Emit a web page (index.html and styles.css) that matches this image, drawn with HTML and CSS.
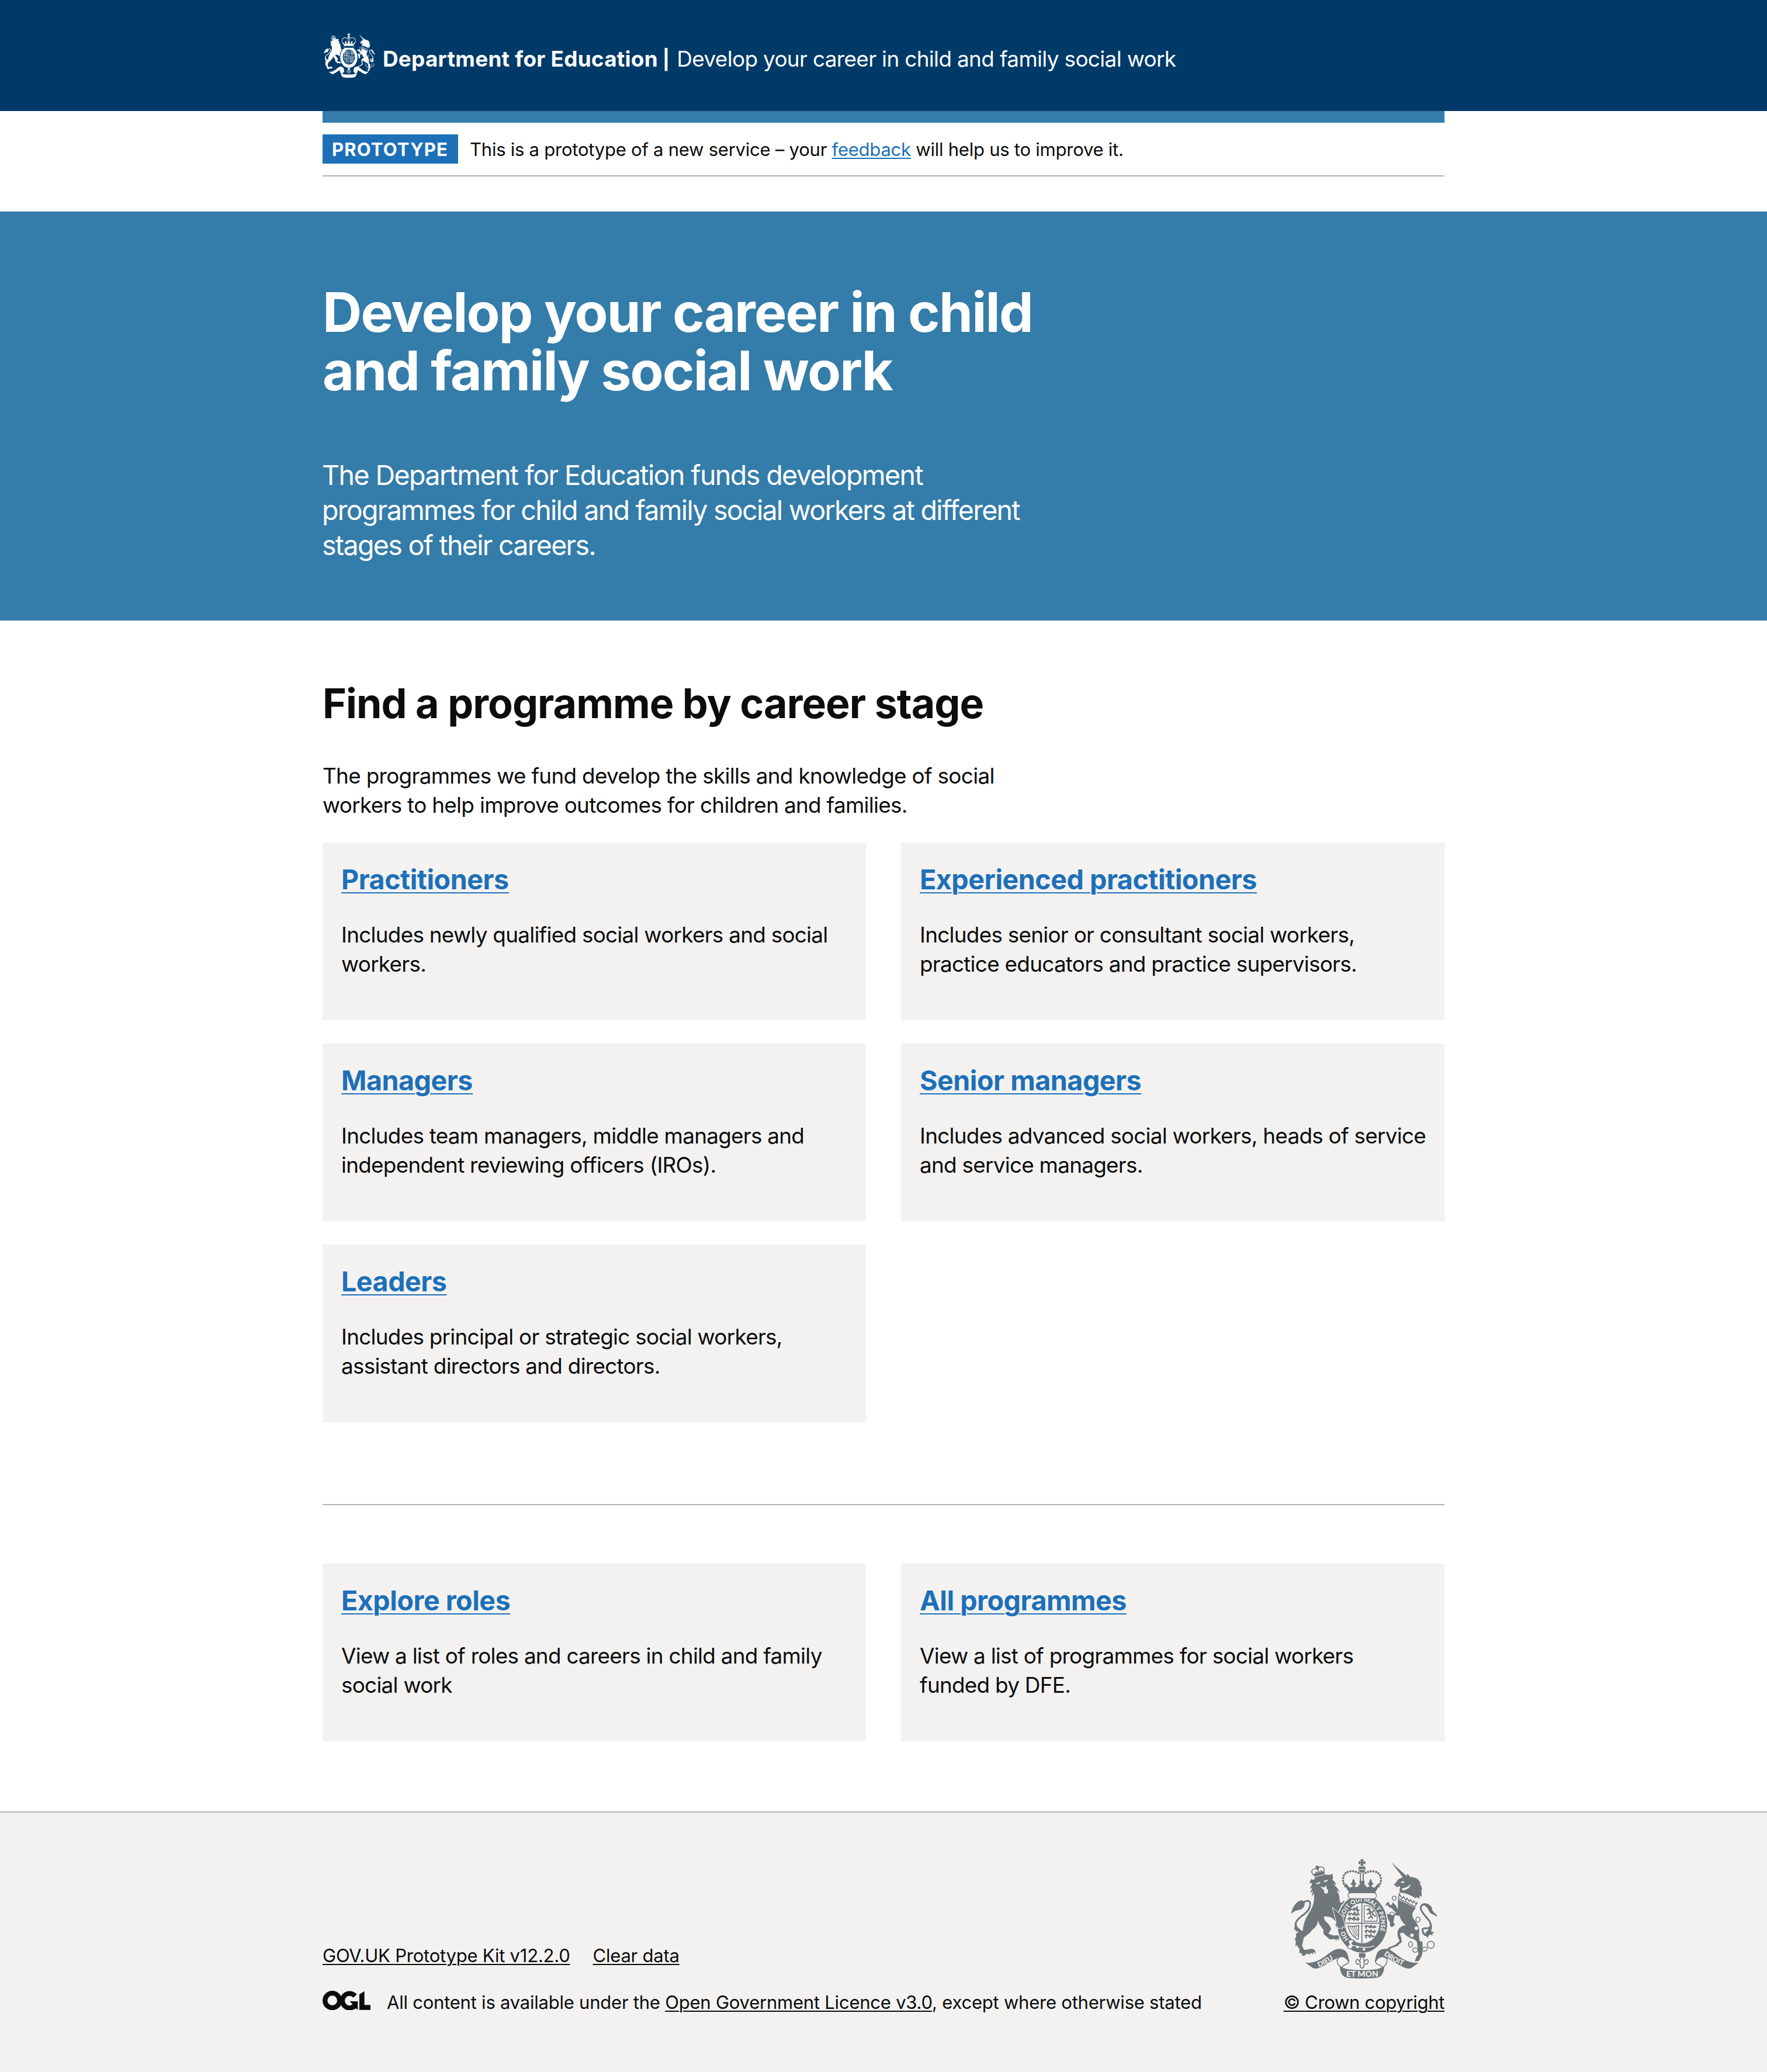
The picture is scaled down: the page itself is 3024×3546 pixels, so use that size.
FILE: index.html
```html
<!DOCTYPE html>
<html lang="en">
<head>
<meta charset="utf-8">
<title>Develop your career in child and family social work</title>
<link rel="stylesheet" href="styles.css">
</head>
<body>
<svg class="defs" aria-hidden="true">
  <defs>
    <g id="lion">
      <!-- lion's crown -->
      <g transform="rotate(-17 233 140)">
        <path d="M203 152h58v6h-58z"/>
        <path d="M206 149l-4-22 10 9 8-13 8 12 5-19 6 19 8-12 7 13 10-9-4 22z"/>
        <path d="M200 134q-6-22 12-25q12-1 19 10q7-12 20-10q16 3 12 25" fill="none" stroke="currentColor" stroke-width="7" stroke-linecap="round" stroke-dasharray="0 8.5"/>
        <path d="M228 96h10v6h6v7h-6v8h-10v-8h-6v-7h6z"/>
      </g>
      <!-- head, mane and body -->
      <path d="M187 178l4-10 12 3q30-18 67-26l17 1 14-6 3 22-4 8q16 12 20 28l-17-6q22 16 36 42l-18-10q14 18 16 38l2 24q6 3 12 1l9-10 6 9-22 18q16 22 6 42l6 50q9 14 9 30l-10-9-2 15-8-7-8 8-5-12-9 7 3-13-10-2 8-12-2-12-22-22q-20-11-44-7 4 22 16 30 22 20 22 36l-14 22q20 10 38 9 14-3 24 4l6 14-16-5 6 12-14-8-1 10-13-9-22 3-30-26q-6-10-2-22l-22-30-8-20q0 26-26 46l-18 20q-20 12-28 22l-9 42 10 20q18 2 30-4 20-3 28 10l2 14-15-9 4 14-14-8-8 8-12-5-14 12-10-2-4-13-10 2q-2-14 0-26l-8-4-4-12-9 4 2-26-6-8 8-14-2-14 14-10 22-8q2-42 28-84 30-40 30-86l-2-22-9 18q-2-14 6-28l-17 10q8-12 12-26l-12 4q10-16 12-30-10 4-14-2 6-6 6-14z"/>
      <!-- tail -->
      <path d="M168 458q-62-38-56-62 4-22 44-48 34-26 30-58-6-20-32-4" fill="none" stroke="currentColor" stroke-width="9"/>
      <path d="M156 283q-12-12-29-2-16 9-30 36-4 12-10 30 20-18 36-20 36-4 36-38z"/>
      <path d="M108 398l-2 24-4 4 14 4-6 8 14-2 6 12 8-12 6 2-10-14q-14-8-18-26z"/>
    </g>
    <g id="unicorn">
      <path d="M603 81l80 72-16 12z"/>
      <!-- head and mane -->
      <path d="M617 196q14-14 22-28 20-10 42-12l4-16q10 6 14 16 40 0 56 34l-8-3q14 18 14 40l-5-6q4 18 3 38l-10-8-2 18-14-10-2 8q-46-28-84-30l-2-18q6-8 0-16l-10 6-9-2 3-8-9 2z"/>
      <!-- crown collar -->
      <path d="M644 243l-4 24 84 42 14-22-10 6-10-14-5 10-12-16-5 10-12-18-6 12-12-20-8 10z" fill="none" stroke="currentColor" stroke-width="5"/>
      <!-- body and legs -->
      <path d="M637 272l92 44-13 18q-12 18 4 42 22 22 26 52v44l4 14 13 4v60l-6 16-12 22-22 2 10-26 9-8-4-36-4-32-12-10q-44-14-55-34-26-4-16 14l7 32-26 22-30 10-14 16-24 12 2-13 10-4 12-14 36-14 22-20q-18-30-8-56 10-20 40-26-24-14-32-46-14-4-26-4l-6 36 8 12-10 10-8 4-10-14 4-6-13-26-24-14 16-10 36 8 14-12-22-24-12-4-10-12-12 4 10-18 26-2 18 16 12 22z"/>
      <!-- tail -->
      <path d="M772 448q-22-30 10-28 34 4 18-36l-30-36q-34-44 4-52" fill="none" stroke="currentColor" stroke-width="9"/>
      <path d="M758 296q22-8 34 0 20 8 22 32 6 10 23 24l-1 10q-10-12-22-14-14-4-22-26-10-18-34-26z"/>
      <path d="M744 428q10 14 30 22l24-30q12-10 8-30 12 24 0 46l20 6-12 4 2 10-16-4-12 18-6-10-8 0z"/>
    </g>
    <g id="unicorn-chain" fill="none" stroke="currentColor" stroke-width="4.5">
      <ellipse cx="618" cy="266" rx="10" ry="11"/>
      <ellipse cx="607" cy="350" rx="12" ry="13"/>
      <ellipse cx="740" cy="375" rx="11" ry="13"/>
      <ellipse cx="702" cy="503" rx="10" ry="14"/>
      <ellipse cx="726" cy="532" rx="13" ry="11"/>
      <ellipse cx="775" cy="527" rx="13" ry="10" transform="rotate(-20 775 527)"/>
      <circle cx="806" cy="505" r="18"/>
    </g>
    <g id="crown">
      <path d="M444 66h18l-4 13 12-5v18l-12-5 3 12h-17l3-12-12 5v-18l12 5z"/>
      <path d="M437 103h31l4 14h-39z"/>
      <path d="M433 121h39q-6 14-19 14t-20-14z"/>
      <path d="M445 136v42M459 136v42" stroke="currentColor" stroke-width="6"/>
      <path d="M366 203q-16-24-9-48 10-26 40-28 26 0 46 14M539 203q16-24 9-48-10-26-40-28-26 0-46 14" fill="none" stroke="currentColor" stroke-width="12" stroke-linecap="round" stroke-dasharray="0 14"/>
      <path d="M364 190q14 4 20 18 16 8 22-6l-13-10 8-6 2-10 6-10 6 10 2 10 8 6-11 10q10 14 22 0l-4-8 10 5-3-22h28l-3 22 10-5-4 8q12 14 22 0l-11-10 8-6 2-10 6-10 6 10 2 10 8 6-13 10q6 14 22 6 6-14 20-18-2 20-18 38l-4 18H386l-4-18q-16-18-18-38z"/>
      <rect x="381" y="238" width="146" height="30" rx="15" class="arms-ground" stroke="currentColor" stroke-width="4"/>
    </g>
    <g id="quarters">
      <ellipse cx="454" cy="394" rx="88" ry="104" class="arms-ground"/>
      <g fill="none" stroke="currentColor" stroke-width="5">
        <path d="M452 290v210M368 394h172"/>
        <path d="M464 304v80h66v-24q-8-36-44-56z" stroke-width="4"/>
        <path d="M388 328q14-12 24 0l10-10 6 12 12-4M382 350q14-12 24 0l10-10 6 12 18-4M378 374q14-12 26 0l10-10 8 12 18-4M392 318l-2 16M412 312v14M428 306v20M386 340l6 16M414 336l2 18M432 334l-2 18M388 362v20M412 360v22M432 360v22" stroke-width="7"/>
        <path d="M466 412q14-10 24 2l10-8 6 10 20-4M466 436q14-10 24 2l10-8 6 10 20-4M466 460q14-10 24 2l10-8 6 10 12-4M474 404v18M496 404v16M516 404v16M474 428v18M496 428v18M516 428v18M474 452v20M494 452v18" stroke-width="7"/>
        <path d="M476 326q12-8 16 8 14 0 16 14l16 12M478 348l16-8 6 18-16 12M486 316l10 14M504 340l10-12M500 358l8 14" stroke-width="7"/>
        <path d="M382 408q30 6 54-2l-2 68q-8 6-14-4-34-26-38-62z"/>
        <path d="M392 412l28 52M402 412l24 50M412 412l18 44M422 411l8 26" stroke-width="3"/>
      </g>
    </g>
    <g id="scroll">
      <path id="ribbon-end" d="M162 597C228 602 262 562 300 537C325 520 362 522 376 548Q386 568 385 596Q370 568 345 568C312 574 272 606 240 620Q215 632 200 624Z"/>
      <use href="#ribbon-end" transform="matrix(-1 0 0 1 906 0)"/>
      <path id="ribbon-fold" d="M385 580q2 22-20 28-12 4-14 14-22-8-26-32-2-20 20-24" fill="none" stroke="currentColor" stroke-width="4.5"/>
      <use href="#ribbon-fold" transform="matrix(-1 0 0 1 906 0)"/>
      <path d="M338 614q20 14 58 18 57 5 114 0 38-4 58-18-2 28-14 46-12 14-36 16-65 4-130 0-24-2-36-16-12-18-14-46z"/>
    </g>
    <g id="fleur">
      <path d="M437 548h33v22h-33z"/>
      <path d="M453 564q16 16 8 36 8-20 18-20 12 8 0 24h-14l-4 6 2 8-10 8-10-8 2-8-4-6h-14q-12-16 0-24 10 0 18 20-8-20 8-36z" class="arms-ground" stroke="currentColor" stroke-width="5"/>
    </g>
    <path id="ring-lower" d="M386 476A96 113 0 0 1 358 396"/>
    <path id="ring-upper" d="M361 367A96 113 0 1 1 507 490"/>
    <path id="scroll-dieu" d="M232 620Q284 598 336 556"/>
    <path id="scroll-droit" d="M564 556Q618 600 690 620"/>
  </defs>
</svg>

<header class="header">
  <div class="container header-row">
    <svg class="header-crest" viewBox="87 66 750 612" preserveAspectRatio="none" fill="currentColor" role="img" aria-label="Royal coat of arms">
      <use href="#lion"/><use href="#unicorn"/><use href="#unicorn-chain"/><use href="#scroll"/>
      <path d="M325 590q0-22 20-24 30 0 40 20-4 20-34 36-22-8-26-32zM581 590q0-22-20-24-30 0-40 20 4 20 34 36 22-8 26-32z"/>
      <ellipse cx="454" cy="396" rx="136" ry="156" class="arms-ground"/>
      <ellipse cx="454" cy="396" rx="126" ry="147"/>
      <use href="#quarters"/><use href="#crown"/><use href="#fleur"/>
    </svg>
    <p class="header-title"><span class="header-org">Department for Education <span class="bar">|</span></span><span class="header-service">Develop your career in child and family social work</span></p>
  </div>
</header>

<div class="container">
  <div class="phase-banner">
    <strong class="tag">PROTOTYPE</strong>
    <span class="phase-text">This is a prototype of a new service – your <a class="link" href="#">feedback</a> will help us to improve it.</span>
  </div>
</div>

<section class="hero">
  <div class="container">
    <h1 class="hero-title">Develop your career in child<br>and family social work</h1>
    <p class="hero-lead"><span class="lead-first">The Department for Education funds development</span><br>programmes for child and family social workers at different<br>stages of their careers.</p>
  </div>
</section>

<main class="container main">
  <h2 class="section-title">Find a programme by career stage</h2>
  <p class="body intro">The programmes we fund develop the skills and knowledge of social<br>workers to help improve outcomes for children and families.</p>
  <div class="cards">
    <article class="card">
      <h3 class="card-title"><a class="link" href="#">Practitioners</a></h3>
      <p class="body">Includes newly qualified social workers and social<br>workers.</p>
    </article>
    <article class="card">
      <h3 class="card-title"><a class="link" href="#">Experienced practitioners</a></h3>
      <p class="body">Includes senior or consultant social workers,<br>practice educators and practice supervisors.</p>
    </article>
    <article class="card">
      <h3 class="card-title"><a class="link" href="#">Managers</a></h3>
      <p class="body">Includes team managers, middle managers and<br>independent reviewing officers (IROs).</p>
    </article>
    <article class="card">
      <h3 class="card-title"><a class="link" href="#">Senior managers</a></h3>
      <p class="body">Includes advanced social workers, heads of service<br>and service managers.</p>
    </article>
    <article class="card">
      <h3 class="card-title"><a class="link" href="#">Leaders</a></h3>
      <p class="body">Includes principal or strategic social workers,<br>assistant directors and directors.</p>
    </article>
  </div>
  <hr class="rule">
  <div class="cards">
    <article class="card">
      <h3 class="card-title"><a class="link" href="#">Explore roles</a></h3>
      <p class="body">View a list of roles and careers in child and family<br>social work</p>
    </article>
    <article class="card">
      <h3 class="card-title"><a class="link" href="#">All programmes</a></h3>
      <p class="body">View a list of programmes for social workers<br>funded by DFE.</p>
    </article>
  </div>
</main>

<footer class="footer">
  <div class="container footer-row">
    <div class="footer-meta">
      <div class="footer-links"><a href="#">GOV.UK Prototype Kit v12.2.0</a><a href="#">Clear data</a></div>
      <div class="licence">
        <svg class="ogl" viewBox="0 0 246 100" role="img" aria-label="Open Government Licence">
          <circle cx="50" cy="50" r="37.5" fill="none" stroke="currentColor" stroke-width="25"/>
          <path d="M167 27A37 37 0 1 0 167 75" fill="none" stroke="currentColor" stroke-width="25"/>
          <path d="M139 54h42v44l-10-8q-8 6-20 8l-8-20 12-8z" fill="currentColor"/>
          <path d="M189 19L215 2V73H246V98H189Z" fill="currentColor"/>
        </svg>
        <span>All content is available under the <a href="#">Open Government Licence v3.0</a>, except where otherwise stated</span>
      </div>
    </div>
    <div class="copyright">
      <svg class="footer-arms" viewBox="87 66 750 612" fill="currentColor" role="img" aria-label="Royal coat of arms">
        <use href="#lion"/><use href="#unicorn"/><use href="#unicorn-chain"/>
        <path d="M216 190l20-8 4 6-18 6zM254 178l22-8v6l-14 8z" class="arms-ground"/>
        <path d="M238 206l20 4 14-10-2 14 8 10q4 16-10 18-12-2-10-18z" class="arms-ground"/>
        <path d="M650 184l14-6 8 6-12 4zM656 216q34-4 46-24-2 28-40 34z" class="arms-ground"/>
        <g class="arms-ground"><circle cx="732" cy="420" r="9"/><circle cx="709" cy="456" r="9"/><ellipse cx="600" cy="292" rx="8" ry="9"/></g>
        <ellipse cx="454" cy="396" rx="133" ry="154" class="arms-ground"/>
        <ellipse cx="454" cy="396" rx="128" ry="149"/>
        <use href="#quarters"/>
        <path d="M382 486q12-14 32-2l-14 12 8 12-8 16q-18 4-24-10l12-10z" class="arms-ground" stroke="currentColor" stroke-width="4"/>
        <path d="M398 506q60 20 118 6" fill="none" class="ring-edge"/>
        <g class="arms-ground"><circle cx="429" cy="516" r="7"/><circle cx="463" cy="528" r="7"/></g>
        <text class="motto motto-ring"><textPath href="#ring-lower">HO</textPath></text>
        <text class="motto motto-ring"><textPath href="#ring-upper">SOIT QUI MAL Y PENSE</textPath></text>
        <!-- forepaw resting on the garter -->
        <path d="M300 312l50 42q10 20 14 46l-2 18-10-7-2 13-9-7-8 8-5-12-9 7 3-13-10-2 8-12-2-14z" class="paw"/>
        <use href="#crown"/><use href="#scroll"/><use href="#fleur"/>
        <text class="motto motto-scroll"><textPath href="#scroll-dieu">DIEU</textPath></text>
        <text class="motto motto-scroll"><textPath href="#scroll-droit">DROIT</textPath></text>
        <text class="motto motto-base" x="454" y="669" text-anchor="middle">ET MON</text>
      </svg>
      <a href="#">© Crown copyright</a>
    </div>
  </div>
</footer>
</body>
</html>
```
FILE: styles.css
```css
* { box-sizing: border-box; }

body {
  margin: 0;
  background: #fff;
  color: #0b0c0c;
  font-family: Inter, "Liberation Sans", sans-serif;
}

h1, h2, h3, p { margin: 0; }

.defs { display: block; width: 0; height: 0; }

.container { width: 1920px; margin: 0 auto; }

a {
  color: inherit;
  text-decoration: underline;
  text-decoration-thickness: 2px;
  text-underline-offset: 0.1em;
}

.link { color: #1d70b8; }

/* Header */
.header {
  --ground: #003a69;
  height: 190px;
  background: #003a69;
  color: #fff;
}

.header-row { display: flex; padding-top: 57px; }

.header-crest { width: 88px; height: 76px; margin-left: 2px; }

.arms-ground { fill: var(--ground); }

.header-title {
  display: flex;
  gap: 12px;
  margin: 19px 0 0 13px;
  font-size: 36.86px;
  line-height: 50px;
  white-space: nowrap;
}

.header-org { font-weight: 700; letter-spacing: 0.25px; }

.bar { margin-left: -1px; font-size: 33px; }

.header-service { letter-spacing: -0.64px; }

/* Phase banner */
.phase-banner {
  display: flex;
  gap: 20px;
  height: 112px;
  padding-top: 20px;
  border-top: 20px solid #347ca9;
  border-bottom: 2px solid #b1b4b6;
  font-size: 31.04px;
  line-height: 40px;
}

.tag {
  width: 232px;
  height: 50px;
  padding: 6px 0 0 16px;
  background: #1d70b8;
  color: #fff;
  letter-spacing: 1.145px;
}

.phase-text { padding-top: 6px; letter-spacing: -0.25px; }

/* Hero */
.hero {
  height: 700px;
  margin-top: 60px;
  padding-top: 122px;
  background: #347ca9;
  color: #fff;
}

.hero-title {
  font-size: 93.12px;
  line-height: 100px;
  letter-spacing: -1.85px;
}

.hero-lead {
  margin: 99px 0 0 -1px;
  font-size: 46.56px;
  line-height: 60px;
  letter-spacing: -1.72px;
}

.lead-first { letter-spacing: -1.59px; }

/* Main */
.main { padding: 102px 0 120px; }

.section-title {
  font-size: 69.84px;
  line-height: 80px;
  letter-spacing: -0.968px;
}

.body {
  font-size: 36.86px;
  line-height: 50px;
  letter-spacing: -0.69px;
}

.intro { margin: 59px 0 39px; }

.cards {
  display: grid;
  grid-template-columns: repeat(2, minmax(0, 1fr));
  gap: 40px 60px;
}

.card {
  height: 304px;
  padding: 33px 32px 31px;
  background: #f3f2f1;
}

.card .body { letter-spacing: -0.73px; white-space: nowrap; }

.card-title {
  margin-bottom: 40px;
  font-size: 46.56px;
  line-height: 60px;
  letter-spacing: -0.45px;
}

.rule {
  height: 2px;
  margin: 140px 0 100px;
  border: 0;
  background: #b1b4b6;
}

/* Footer */
.footer {
  --ground: #f3f2f1;
  height: 446px;
  padding-top: 80px;
  border-top: 2px solid #b1b4b6;
  background: #f3f2f1;
  font-size: 31.04px;
  line-height: 40px;
  letter-spacing: -0.24px;
}

.footer-row {
  display: flex;
  justify-content: space-between;
  align-items: flex-end;
}

.footer-links { display: flex; gap: 39px; margin-bottom: 40px; }

.licence { display: flex; gap: 28px; }

.ogl { width: 82px; height: 33.3px; }

.copyright {
  display: flex;
  flex-direction: column;
  align-items: center;
  gap: 21px;
  letter-spacing: -0.322px;
}

.footer-arms { width: 250px; height: 204px; color: #6f777b; }

.motto {
  fill: #f3f2f1;
  font-family: Lato, sans-serif;
  font-weight: 900;
  letter-spacing: 0;
}

.motto-ring { font-size: 31px; }

.motto-scroll { font-size: 36px; }

.motto-base { font-size: 42px; }

.ring-edge { stroke: #f3f2f1; stroke-width: 4; }

.paw { stroke: #f3f2f1; stroke-width: 3; }
```
